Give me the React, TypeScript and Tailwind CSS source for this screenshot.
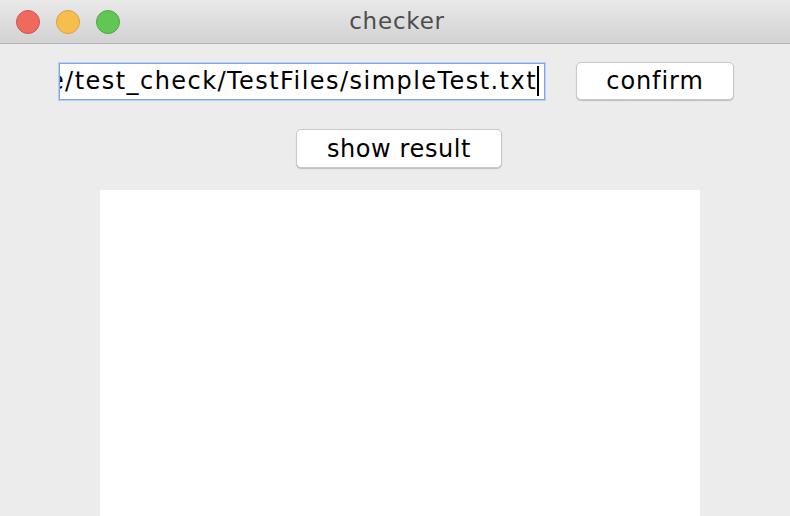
export default function App() {
  return (
    <div className="w-[790px] h-[516px] bg-[#ececec] overflow-hidden flex flex-col" style={{ fontFamily: '"DejaVu Sans", "Liberation Sans", sans-serif' }}>
      <div className="h-[44px] shrink-0 relative flex items-center justify-center bg-gradient-to-b from-[#e9e9e9] to-[#d2d2d2] border-b border-[#b4b4b4]">
        <div className="absolute left-[16px] top-[10px] flex gap-[16px]">
          <div className="w-[24px] h-[24px] rounded-full bg-[#ee6a5f] border border-[#d5544a]" />
          <div className="w-[24px] h-[24px] rounded-full bg-[#f5be4f] border border-[#d9a33d]" />
          <div className="w-[24px] h-[24px] rounded-full bg-[#62c655] border border-[#4ea843]" />
        </div>
        <span className="text-[23px] tracking-[0.8px] text-[#4d4d4d] leading-none pb-[1px] pl-[4px]">checker</span>
      </div>
      <div className="flex items-center pt-[18px] pl-[59px]">
        <div className="w-[486px] h-[37px] bg-white border border-[#7aa9e6] flex items-center justify-end overflow-hidden pr-[5px] shadow-[0_0_0_1px_#b5d0f2]">
          <span className="whitespace-nowrap text-[24px] tracking-[1.45px] text-black leading-none">e/test_check/TestFiles/simpleTest.txt</span>
          <span className="w-[2px] h-[30px] bg-black shrink-0" />
        </div>
        <button className="ml-[31px] w-[158px] h-[38px] bg-white rounded-[5px] border border-[#c8c8c8] shadow-[0_1px_1px_rgba(0,0,0,0.2)] text-[24px] tracking-[0.9px] text-black leading-none flex items-center justify-center">confirm</button>
      </div>
      <div className="flex justify-center pt-[29px] pl-[8px]">
        <button className="w-[206px] h-[39px] bg-white rounded-[5px] border border-[#c8c8c8] shadow-[0_1px_1px_rgba(0,0,0,0.2)] text-[24px] tracking-[0.6px] text-black leading-none flex items-center justify-center">show result</button>
      </div>
      <div className="flex-1 mt-[22px] ml-[100px] w-[600px] bg-white" />
    </div>
  );
}
